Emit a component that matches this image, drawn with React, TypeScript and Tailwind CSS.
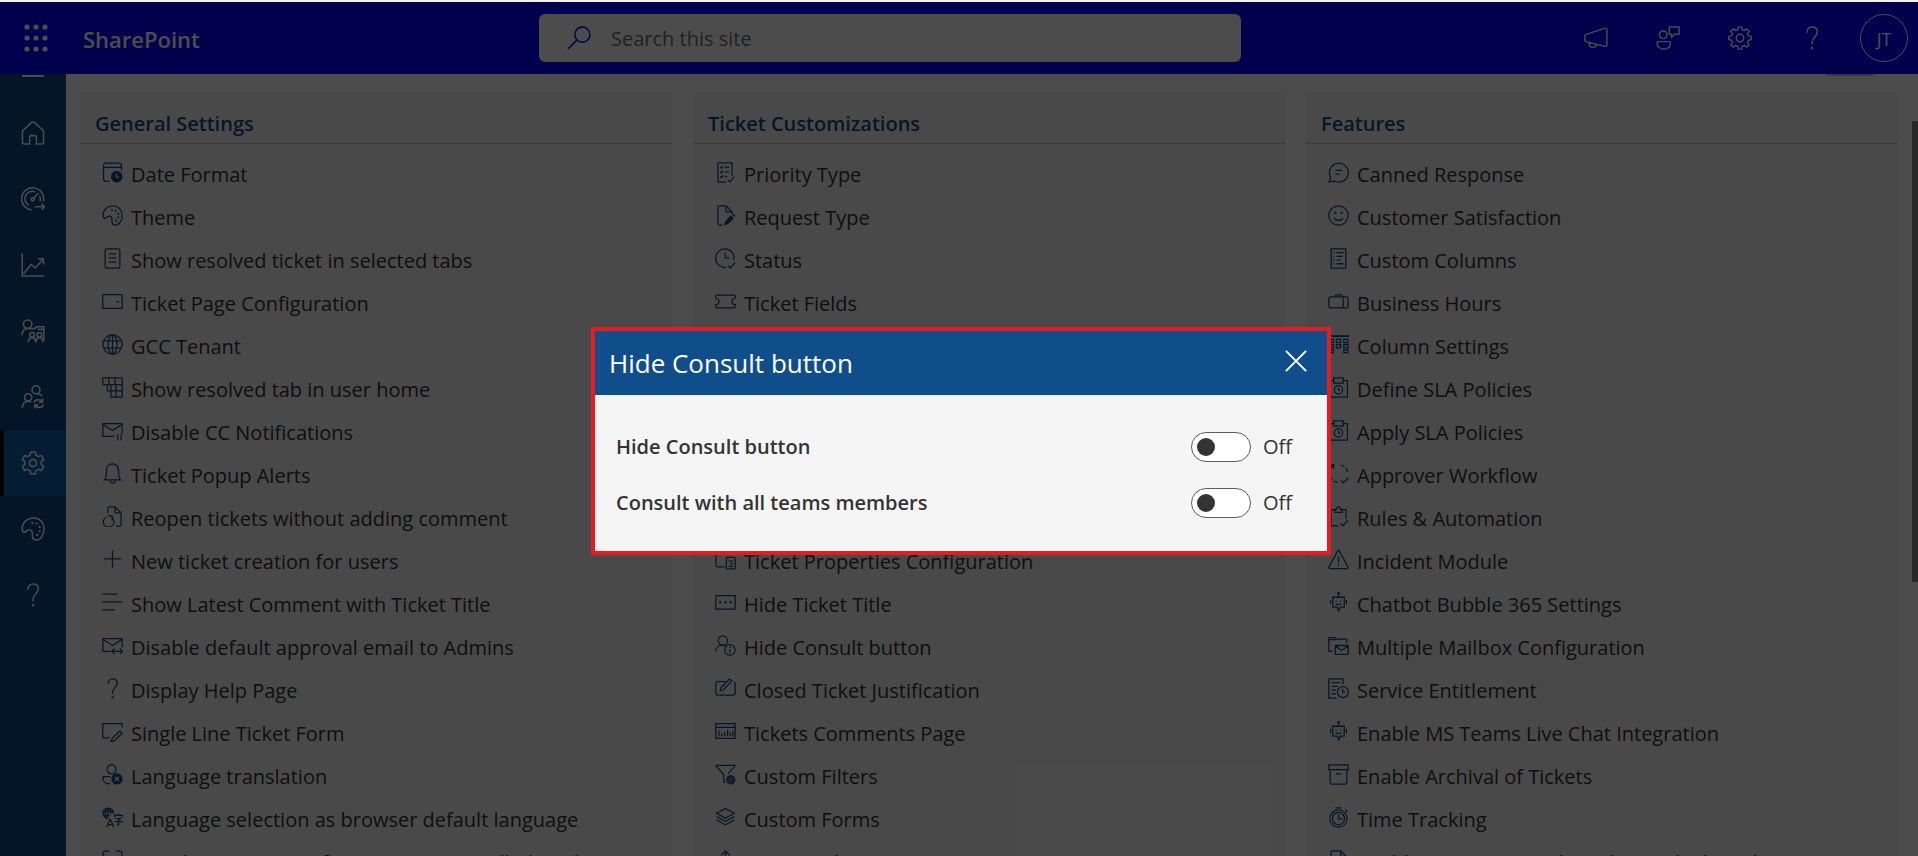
import { useState, type ReactNode } from "react";

function gearPath(teeth: number, outer: number, inner: number, c = 10): string {
  const step = (Math.PI * 2) / teeth;
  const pts: string[] = [];
  for (let i = 0; i < teeth; i++) {
    const a = i * step - Math.PI / 2;
    const corners: [number, number][] = [
      [-0.32, inner],
      [-0.2, outer],
      [0.2, outer],
      [0.32, inner],
    ];
    for (const [f, r] of corners) {
      pts.push(`${(c + Math.cos(a + f * step) * r).toFixed(2)} ${(c + Math.sin(a + f * step) * r).toFixed(2)}`);
    }
  }
  return `M${pts.join("L")}Z`;
}

const palette = (
  <>
    <path d="M1 9.5C1 4.500 5.500.8 10.500.8c5 0 8.700 3.700 8.700 8.900 0 5-2.700 9.500-6.400 9.500-2.600 0-3.600-2-3.300-4.400.3-2.600-.7-4.200-2.600-4.200-2 0-2.500 2-4 2C1.600 12.600 1 11 1 9.500Z" />
    <path strokeWidth="1.9" strokeLinecap="round" d="M9.500 5h.01M13 5.500h.01M15.500 8.300h.01M15.500 11.800h.01M13.500 15h.01" />
  </>
);

const question = (
  <>
    <path d="M5.800 5.600C5.800 2.600 7.600.8 10.200.8c2.500 0 4.200 1.700 4.200 4.100 0 4-4.300 4.600-4.300 8.600v1.700" />
    <path strokeWidth="1.800" d="M10.100 17.400v2" />
  </>
);

const sla = (
  <>
    <path d="M5 3.500H1.500v15.700h17V3.500H15M5.500.8h9v5h-9z" />
    <circle cx="10" cy="12.300" r="4" />
    <path d="M10 10v2.600h1.800" />
  </>
);

const bot = (
  <>
    <path d="M10 1v4M4.500 5h11v9.500h-3.500l-2 3.500-1-3.500H4.500zM2.500 7.500v4M17.500 7.500v4" />
    <path d="M7.800 8v1.200M12.200 8v1.200M7.300 11.200q2.700 1.800 5.400 0" />
    <circle cx="10" cy="1.200" r=".7" />
  </>
);

const ICONS: Record<string, ReactNode> = {
  date: (
    <>
      <path d="M7.500 18.500H3.500a2 2 0 0 1-2-2V3a2 2 0 0 1 2-2h13a2 2 0 0 1 2 2v5M1.500 5.200h17" />
      <circle cx="14" cy="14" r="5.500" fill="currentColor" stroke="none" />
      <path stroke="#f5f5f5" d="M13.800 11v3.400h2.400" />
    </>
  ),
  palette,
  question,
  sla,
  bot,
  list: (
    <>
      <rect x="3" y=".8" width="14" height="18.400" rx="1.500" />
      <path d="M6.500 5.500h7M6.500 9.500h7M6.500 13.500h7" />
    </>
  ),
  page: (
    <>
      <path d="M.8 3.500h18.400v13H.8z" />
      <path d="M13 9.500h4l-2 2z" fill="currentColor" stroke="none" />
    </>
  ),
  globe: (
    <>
      <circle cx="10" cy="10" r="9.200" />
      <ellipse cx="10" cy="10" rx="4.300" ry="9.200" />
      <path d="M10 .8v18.400M1.800 6.500h16.400M1.800 13.500h16.400" />
    </>
  ),
  tabs: <path d="M.8.8h18.400v18.400H8.500v-6H5v-6H.8zM.8 7.200h18.400M6.500.8v6.400M12.500.8v6.400M8.500 7.200v6h10.700M13.500 13.200v6M13.500 7.200v6" />,
  mailPause: <path d="M12 15.500H.8v-12h18.400v9M.8 4l9.200 6 9.200-6M15 13v6.500M18.200 13v6.500" />,
  bell: (
    <>
      <path d="M2.500 16h15c-1.500-1.500-1.700-3-1.700-8.500C15.800 3.500 13.500.8 10 .8S4.200 3.500 4.200 7.500C4.200 13 4 14.500 2.500 16Z" />
      <path d="M7.500 16.500c.3 1.700 1.300 2.600 2.500 2.600s2.200-.9 2.500-2.600" />
    </>
  ),
  reopen: (
    <>
      <path d="M5.500 7V2.300Q5.500.8 7 .8h5.500l5.700 5.700v11.200q0 1.500-1.500 1.500H13M12.500.8v5.700h5.700" />
      <path d="M4.500 10.500a5 5 0 1 0 4.500.5M5.500 9.500h4.200v4" />
    </>
  ),
  plus: <path d="M10 1.500v16M2 9.500h16" />,
  lines: <path d="M.5 2h14M.5 9.500h19M.5 17h12" />,
  mailArrows: <path d="M8 15.500H.8v-12h18.400V12M.8 4l9.200 6 9.200-6M9.500 15.500h10M12 12.800l-2.700 2.700L12 18.200M17 12.800l2.700 2.700-2.700 2.700" />,
  formEdit: (
    <>
      <path d="M7.500 16H.8V2.500h18.400V6" />
      <path d="M17 9.500l2.200 2-7.400 7.200-3 .8.900-3z" />
    </>
  ),
  translate: (
    <>
      <ellipse cx="9" cy="5" rx="4.200" ry="4.300" />
      <path d="M8 12H1v2c0 3 3 5 7 5" />
      <circle cx="14.200" cy="14.200" r="5.400" fill="currentColor" stroke="none" />
      <path stroke="#f5f5f5" d="M12.200 12.200l4 4M16.200 12.200l-4 4" />
    </>
  ),
  language: (
    <>
      <path d="M5.500 11A5 5 0 1 1 10.900 6.500M1 4.300h9.500M1 8h6.500M5.800 1v9.500M4.500 10.500C2.500 7.500 2.800 4 5.500 1M8.500 7c.2-2.500-.8-4.500-2.700-6" />
      <path d="M4.500 19.200l3-7.500h.6l3 7.500M5.500 16.800h4.700" />
      <path d="M12 10V8h7.500v2M15.700 6.300V8M13.300 11h4.200l-1.700 1.600v4.500h-1.500M12 14h7.800" />
    </>
  ),
  corners: (
    <path d="M1 6V3q0-2 2-2h4M13 1h4q2 0 2 2v3M1 14v3q0 2 2 2h4M13 19h4q2 0 2-2v-3" />
  ),
  checklist: (
    <>
      <path d="M10.500 19.200H2.800V.8h13.500v12.500M12 17l2 2 4.500-5" />
      <path d="M5 4.800l1 1 2-2M9.500 5h4M5 9.300l1 1 2-2M9.500 9.500h4M5 13.800l1 1 2-2M9.500 14h2" />
    </>
  ),
  request: (
    <>
      <path d="M7 19.200H4.300q-1.500 0-1.500-1.500V2.300Q2.800.8 4.300.8h6.500L16 6.500V8M10.500.8v5.700H16" />
      <path d="M15 9.800l3 3-5.800 5.500-3.600 1.200 1-3.800zM16 8.800l1.200-1 2.200 2.500-1 1.300z" fill="currentColor" stroke="none" />
    </>
  ),
  clock: <path d="M10.500 18.400A8.800 8.800 0 1 1 18 11.500M9.800 4.500v5h4M12.500 16.800l2 2.200 4.500-5" />,
  ticket: <path d="M2 4h16q1.200 0 1.200 1.200V7a3 3 0 0 0 0 6v1.800Q19.200 16 18 16H2Q.8 16 .8 14.800V13a3 3 0 0 0 0-6V5.200Q.8 4 2 4Z" />,
  properties: (
    <>
      <path d="M9 17H2.300Q.8 17 .8 15.500v-13Q.8 1 2.300 1H17v3.500" />
      <rect x="10.800" y="8" width="8.400" height="11" rx="1" />
      <path d="M13 11.500h4M14 14h3M13 16.500h4" />
    </>
  ),
  dots: (
    <>
      <path d="M.8 3.500h18.400v12.700H.8z" />
      <path strokeWidth="2.400" strokeLinecap="round" d="M5 9.800h.01M10 9.800h.01M15 9.800h.01" />
    </>
  ),
  personInfo: (
    <>
      <circle cx="7.500" cy="5.200" r="4.400" />
      <path d="M.8 16c0-3.800 2.600-6.400 6.200-6.400 1.200 0 2.200.3 3 .8" />
      <circle cx="14.200" cy="14.200" r="5" />
      <path d="M14.200 13.500v3.600M14.200 11v1.300" />
    </>
  ),
  cardEdit: (
    <>
      <path d="M10 3.500H2.500Q.8 3.500.8 5.200v9.300q0 1.700 1.700 1.700h15q1.700 0 1.700-1.700V5.200q0-1-.8-1.500" />
      <path d="M13.800 1l2.200 2-7.800 8.200-3.200 1 .9-3.200z" />
    </>
  ),
  chartPage: (
    <>
      <path d="M.8 2.500h18.400v14H.8zM.8 6h18.400" />
      <path d="M3.800 9v5.500M6.500 11.800v2.700M9.300 10.500v4M12 8.800v5.700M14.500 11v3.500M17 9.500v5" />
    </>
  ),
  filter: (
    <>
      <path d="M10 17.500H8.300V10L1 2V1.200h18V2l-6.300 7" />
      <path d={gearPath(8, 3.900, 2.700, 15)} />
      <circle cx="15" cy="15" r="1.200" />
    </>
  ),
  layers: <path d="M10 1.500l8.500 4.500-8.500 4.500L1.500 6zM1.500 9.200L10 13.700l8.500-4.500M1.500 12.400l8.500 4.500 8.500-4.500" />,
  merge: <path d="M10 19V1.500M6 5l4-4 4 4M4 19c0-4 6-4 6-8M16 19c0-4-6-4-6-8" />,
  chat: <path d="M1 19l1.500-4.500A9 9 0 1 1 6.500 18.300zM7 8h6.500M7 11.500h4" />,
  smile: (
    <>
      <circle cx="10" cy="10" r="9.200" />
      <path d="M5.800 12.500c1.800 3 6.600 3 8.400 0" />
      <path strokeWidth="2.200" strokeLinecap="round" d="M7 7.500h.01M13 7.500h.01" />
    </>
  ),
  columns: (
    <>
      <path d="M3 .8h14v18.400H3z" />
      <path d="M8 4.500h7M8 8h6M8 11.500h4M8 15h7M5 4.500h1M5 8h1M5 11.500h1M5 15h1" />
    </>
  ),
  briefcase: <path d="M2.300 5.500h15.400q1.500 0 1.500 1.500v7.500q0 1.500-1.500 1.500H2.300Q.8 16 .8 14.500V7q0-1.500 1.500-1.500ZM6.500 5.500q0-1.800 2-1.800h3q2 0 2 1.800M14.500 5.500V16" />,
  grid: (
    <>
      <path strokeWidth="1.800" d="M0 2h20" />
      <path d="M1 5.200h4v3H1zM8 5.200h4v3H8zM15 5.200h4v3h-4zM1 10.200h4v3H1zM8 10.200h4v3H8zM15 10.200h4v3h-4zM1 15.200h4v2.500H1zM15 15.200h4v2.500h-4z" />
    </>
  ),
  approver: (
    <>
      <path d="M1.500 1.500h4v4M5.500 1.500L2.500 5" />
      <path strokeDasharray="4 2.200" d="M2.500 6a8.500 8.500 0 0 0 8.500 12.500M12 2a8.500 8.500 0 0 1 7 9" />
      <path d="M12.500 16.500l2.200 2.300 4.800-4.800" />
    </>
  ),
  clipboard: <path d="M10 19H2.800V3.500H7M13 3.500h4.200v9M6.500 6V3.200H8q.3-2.400 2-2.400t2 2.400h1.500V6zM12 16.500l2.200 2.300 5-5.300" />,
  alert: (
    <>
      <path d="M10 1.300q.6 0 1 .8l8 15q.4 1.400-1 1.600H2q-1.400-.2-1-1.600l8-15q.4-.8 1-.8Z" />
      <path d="M10 7v6M10 14.500v1.600" />
    </>
  ),
  mailbox: <path d="M4.500 15.500H.8v-13h6l1.500 1.500h9.500v3.500M.8 4.500h6.500l1-.5M7 10h12.200v8.500H7zM7 10.500l6 4.300 6-4.300" />,
  serviceDoc: (
    <>
      <path d="M8 19.200H.8V.8h13.500v5.500M3.500 4.500h8M3.500 8h6M3.500 11.500h4M3.500 15h4" />
      <circle cx="14.200" cy="13.500" r="5.200" />
      <path d="M14 10.500v3.300h2.500" />
    </>
  ),
  archive: <path d="M.8.8h18.400v4.500H.8zM2 5.300v11.500q0 2.400 2.400 2.400h11.200q2.400 0 2.400-2.400V5.300M7.500 9.500h5" />,
  stopwatch: (
    <>
      <circle cx="10" cy="11" r="8.200" />
      <circle cx="10" cy="11" r="5.800" />
      <path d="M10 7v4.200h4M7 .8h6M16.500 2.500l2 2" />
    </>
  ),
  doc: <path d="M3 19.200V.8h9L17 6v13.200zM12 .8V6h5" />,
  home: <path d="M1.200 8.300L8.600 1.400q1.400-1.200 2.800 0l7.400 6.900v9.200q0 1.700-1.700 1.700h-4.300v-6q0-1-1-1H8.200q-1 0-1 1v6H2.900q-1.700 0-1.700-1.700z" />,
  gauge: (
    <>
      <path d="M9 19A9.200 9.200 0 1 1 18.600 12" />
      <path d="M6.500 15A6 6 0 1 1 12 4.300M15.500 7.500a6 6 0 0 1 .3 4.500M10 10l4.500-5" />
      <circle cx="9.700" cy="10.300" r="1.300" />
      <path d="M11.500 16.500h8M17 14l2.700 2.500L17 19" />
    </>
  ),
  trend: <path d="M1 .5v18.700h18.500M2 17.500l6.500-8 3.500 3 6.500-7.500M14 4.800h4.700v4.700" />,
  teamBoard: (
    <>
      <circle cx="5.500" cy="4.300" r="3.500" />
      <path d="M.8 13.500c0-3.600 2-5.700 4.700-5.700M6.500 8h4.500l2-1.500h6V18M14 8.500h5" />
      <circle cx="9.300" cy="13.200" r="2" />
      <circle cx="15.300" cy="13.200" r="2" />
      <path d="M6 19.500c.3-2.500 1.500-4 3.300-4s2.700 1.500 3 4c.3-2.500 1.200-4 3-4s3 1.500 3.300 4" />
    </>
  ),
  teamSync: (
    <>
      <circle cx="12.500" cy="4" r="3.300" />
      <path d="M17.500 9.500c-.7-1.500-2.500-2.200-5-2.200" />
      <circle cx="6" cy="10.300" r="3" />
      <path d="M1 19.200c.3-3.500 2.200-5.600 5-5.600 1 0 1.800.2 2.500.7M10.800 14.500c.8-2.500 5.200-3.200 7.200-.5V11.500M18 14.300h-3M18.800 16.500c-.8 2.500-5.200 3-7.200.5v2.500M11.600 16.500h3" />
    </>
  ),
  cog: (
    <>
      <path strokeLinejoin="round" d={gearPath(6, 9.400, 7)} />
      <circle cx="10" cy="10" r="3" />
    </>
  ),
  cogFine: (
    <>
      <path strokeLinejoin="round" d={gearPath(8, 9.400, 7.200)} />
      <circle cx="10" cy="10" r="3.100" />
    </>
  ),
  megaphone: <path strokeLinejoin="round" d="M.8 8v4q0 .8.8 1l16 4q1.500.2 1.500-1.200V3q0-1.500-1.500-1.200L1.800 7Q.8 7.300.8 8ZM4 13.700c.2 2.700 1.500 4.100 3.300 4.100s2.900-1 3.200-2.300" />,
  feedback: (
    <>
      <circle cx="6" cy="7.300" r="3.200" />
      <path d="M2 13h9q1 0 1 1c0 3.500-2.500 5.200-5.500 5.200S.8 17.500.8 14q0-1 1.200-1ZM11 .8h8.200v6h-4L13 9.300l-.2-2.500H11z" />
    </>
  ),
  search: (
    <>
      <circle cx="12.800" cy="7.200" r="6.300" />
      <path d="M8.300 11.700L.8 19.200" />
    </>
  ),
  close: <path d="M.8.8l18.400 18.400M19.200.8L.8 19.200" />,
};

function Icon({ name, className, weight = 1.2 }: { name: string; className: string; weight?: number }) {
  return (
    <svg viewBox="0 0 20 20" fill="none" stroke="currentColor" strokeWidth={weight} className={className} aria-hidden="true">
      {ICONS[name]}
    </svg>
  );
}

type Item = [icon: string, label: string];

const SECTIONS: { title: string; items: Item[] }[] = [
  {
    title: "General Settings",
    items: [
      ["date", "Date Format"],
      ["palette", "Theme"],
      ["list", "Show resolved ticket in selected tabs"],
      ["page", "Ticket Page Configuration"],
      ["globe", "GCC Tenant"],
      ["tabs", "Show resolved tab in user home"],
      ["mailPause", "Disable CC Notifications"],
      ["bell", "Ticket Popup Alerts"],
      ["reopen", "Reopen tickets without adding comment"],
      ["plus", "New ticket creation for users"],
      ["lines", "Show Latest Comment with Ticket Title"],
      ["mailArrows", "Disable default approval email to Admins"],
      ["question", "Display Help Page"],
      ["formEdit", "Single Line Ticket Form"],
      ["translate", "Language translation"],
      ["language", "Language selection as browser default language"],
      ["corners", "Use SharePoint URL for MS Teams installed application"],
    ],
  },
  {
    title: "Ticket Customizations",
    items: [
      ["checklist", "Priority Type"],
      ["request", "Request Type"],
      ["clock", "Status"],
      ["ticket", "Ticket Fields"],
      ["list", "Ticket Sequence"],
      ["page", "Ticket Views"],
      ["columns", "Ticket Columns"],
      ["formEdit", "Ticket Form"],
      ["reopen", "Reopen Tickets"],
      ["properties", "Ticket Properties Configuration"],
      ["dots", "Hide Ticket Title"],
      ["personInfo", "Hide Consult button"],
      ["cardEdit", "Closed Ticket Justification"],
      ["chartPage", "Tickets Comments Page"],
      ["filter", "Custom Filters"],
      ["layers", "Custom Forms"],
      ["merge", "Merge Tickets"],
    ],
  },
  {
    title: "Features",
    items: [
      ["chat", "Canned Response"],
      ["smile", "Customer Satisfaction"],
      ["columns", "Custom Columns"],
      ["briefcase", "Business Hours"],
      ["grid", "Column Settings"],
      ["sla", "Define SLA Policies"],
      ["sla", "Apply SLA Policies"],
      ["approver", "Approver Workflow"],
      ["clipboard", "Rules & Automation"],
      ["alert", "Incident Module"],
      ["bot", "Chatbot Bubble 365 Settings"],
      ["mailbox", "Multiple Mailbox Configuration"],
      ["serviceDoc", "Service Entitlement"],
      ["bot", "Enable MS Teams Live Chat Integration"],
      ["archive", "Enable Archival of Tickets"],
      ["stopwatch", "Time Tracking"],
      ["doc", "Enable comments in the ticket reply thread"],
    ],
  },
];

const NAV: Item[] = [
  ["home", "Home"],
  ["gauge", "Dashboard"],
  ["trend", "Reports"],
  ["teamBoard", "Teams"],
  ["teamSync", "Users"],
  ["cog", "Settings"],
  ["palette", "Theme"],
  ["question", "Help"],
];

const HEADER_ACTIONS: Item[] = [
  ["megaphone", "Announcements"],
  ["feedback", "Feedback"],
  ["cogFine", "Site settings"],
  ["question", "Help"],
];

function SuiteHeader() {
  return (
    <header className="flex h-[72px] shrink-0 items-center bg-[#0000ff] text-white">
      <div className="flex w-[539px] items-center">
        <button type="button" aria-label="App launcher" className="flex w-[71px] justify-center">
          <svg viewBox="0 0 24 28" className="h-7 w-6" fill="currentColor" aria-hidden="true">
            {[0, 1, 2].flatMap((r) =>
              [0, 1, 2].map((c) => <circle key={`${r}-${c}`} cx={3 + c * 9} cy={3 + r * 11} r="2.600" />),
            )}
          </svg>
        </button>
        <a href="#sharepoint" className="ml-3 pt-0.5 text-[22px] font-semibold">
          SharePoint
        </a>
      </div>
      <label className="flex h-12 w-[702px] items-center gap-5 rounded-md bg-white pl-7 text-[#0000ff]">
        <Icon name="search" className="size-6" />
        <span className="sr-only">Search this site</span>
        <input
          type="search"
          placeholder="Search this site"
          className="flex-1 bg-transparent pt-0.5 text-[20px] text-[#333333] outline-none placeholder:text-[#707070]"
        />
      </label>
      <div className="flex flex-1 items-center justify-end pr-2.5">
        {HEADER_ACTIONS.map(([icon, label]) => (
          <button key={label} type="button" aria-label={label} className="flex h-12 w-[72px] items-center justify-center">
            <Icon name={icon} className="size-6" weight={1.2} />
          </button>
        ))}
        <button
          type="button"
          aria-label="Account manager for JT"
          className="ml-3 flex size-12 items-center justify-center rounded-full border border-white pt-0.5 text-lg font-medium"
        >
          JT
        </button>
      </div>
    </header>
  );
}

function SideNav() {
  return (
    <nav aria-label="Main" className="flex w-[66px] shrink-0 flex-col bg-[#0a467f] text-white">
      <button type="button" aria-label="Toggle menu" className="flex h-[26px] justify-center pt-px">
        <span className="h-0.5 w-[22px] bg-white" />
      </button>
      {NAV.map(([icon, label]) => {
        const active = label === "Settings";
        return (
          <a
            key={label}
            href={`#${label.toLowerCase()}`}
            aria-label={label}
            className={
              active
                ? "flex h-[66px] items-center justify-center border-l-4 border-black bg-[#0e63ae] pr-1"
                : "flex h-[66px] items-center justify-center"
            }
          >
            <Icon name={icon} className="size-6" weight={1.3} />
          </a>
        );
      })}
    </nav>
  );
}

function SettingsPanel({ title, items }: { title: string; items: Item[] }) {
  return (
    <section className="min-w-0 bg-[#f5f5f5]">
      <h2 className="flex h-[52px] items-center border-b border-[#c8c8c8] px-[15px] pt-3 text-[20px] font-semibold text-[#0f4e8a]">
        {title}
      </h2>
      <ul className="pt-[9px]">
        {items.map(([icon, label]) => (
          <li key={label}>
            <button type="button" className="flex h-[43px] w-full items-center gap-2 px-[22px] text-left text-[20px] text-[#333333]">
              <Icon name={icon} className="mb-1 size-[21px] shrink-0 text-[#0f4e8a]" />
              <span className="truncate">{label}</span>
            </button>
          </li>
        ))}
      </ul>
    </section>
  );
}

function ToggleRow({ id, label }: { id: string; label: string }) {
  const [on, setOn] = useState(false);
  return (
    <div className="flex h-14 items-center">
      <label htmlFor={id} className="flex-1 text-[20px] font-semibold text-[#333333]">
        {label}
      </label>
      <input
        id={id}
        type="checkbox"
        role="switch"
        checked={on}
        onChange={(e) => setOn(e.target.checked)}
        className="flex h-[30px] w-[60px] appearance-none items-center rounded-full border border-[#605e5c] bg-white px-[5px] before:size-[18px] before:rounded-full before:bg-[#333333] checked:justify-end"
      />
      <span className="ml-3 w-8 text-[20px] text-[#333333]">{on ? "On" : "Off"}</span>
    </div>
  );
}

function ConsultDialog({ onClose }: { onClose: () => void }) {
  return (
    <div className="absolute inset-0 flex items-center justify-center bg-black/70 pt-6 pl-1">
      <div role="dialog" aria-modal="true" aria-labelledby="dialog-title" className="w-[740px] border-4 border-[#e81c1c] bg-[#f5f5f5]">
        <div className="flex h-16 items-center justify-between bg-[#0f4e8a] pr-5 pl-[14px] text-white">
          <h1 id="dialog-title" className="text-[26px]">
            Hide Consult button
          </h1>
          <button type="button" aria-label="Close" onClick={onClose}>
            <Icon name="close" className="mb-1 size-[22px]" weight={1.8} />
          </button>
        </div>
        <div className="pt-6 pr-8 pb-5 pl-[21px]">
          <ToggleRow id="hide-consult" label="Hide Consult button" />
          <ToggleRow id="consult-teams" label="Consult with all teams members" />
        </div>
      </div>
    </div>
  );
}

export default function App() {
  const [open, setOpen] = useState(true);
  return (
    <div className="flex h-screen flex-col overflow-hidden border-t-2 border-[#f8eeea] bg-white font-['Open_Sans','Noto_Sans',sans-serif]">
      <div className="relative flex min-h-0 flex-1 flex-col">
        <SuiteHeader />
        <div className="flex min-h-0 flex-1">
          <SideNav />
          <main className="relative grid flex-1 grid-cols-3 gap-[21px] overflow-hidden pt-[18px] pr-5 pl-[14px]">
            <div className="absolute top-0 right-11 h-0.5 w-12 rounded-b bg-[#a9c4de]" />
            {SECTIONS.map((s) => (
              <SettingsPanel key={s.title} title={s.title} items={s.items} />
            ))}
            <div className="absolute top-[47px] right-0 h-[461px] w-1.5 bg-[#8a8a8a]" />
          </main>
        </div>
        {open && <ConsultDialog onClose={() => setOpen(false)} />}
      </div>
    </div>
  );
}
